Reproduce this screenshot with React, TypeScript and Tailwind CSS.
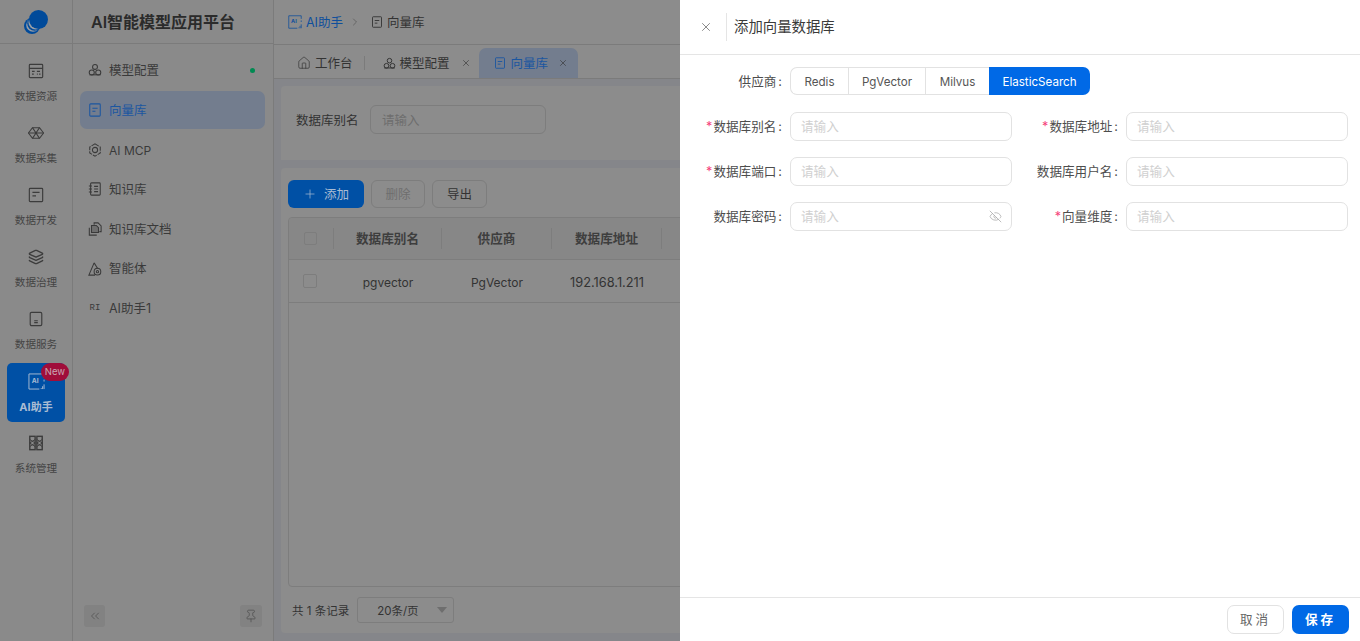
import React from "react";
import { X, Home, ChevronRight, Plus, ChevronsLeft, Pin, EyeOff, Layers } from "lucide-react";

type IP = { className?: string };
const S = ({ className, children, vb = "0 0 16 16", sw = 1 }: IP & { children: React.ReactNode; vb?: string; sw?: number }) => (
  <svg viewBox={vb} fill="none" stroke="currentColor" strokeWidth={sw} className={className}>{children}</svg>
);
const DocIcon = ({ className }: IP) => (
  <S className={className} sw={1.2}><rect x="2" y="1" width="12" height="14" rx="1" /><path d="M5 6h6M5 9.500h3.500" /></S>
);
const TriIcon = ({ className }: IP) => (
  <S className={className} sw={1.2}><circle cx="8" cy="4.500" r="2.800" /><circle cx="4.300" cy="10.800" r="2.900" /><circle cx="11.700" cy="10.800" r="2.900" /><path d="M1.500 13.500h13" /></S>
);
const McpIcon = ({ className }: IP) => (
  <S className={className} sw={1.2}><path d="M8 1l6 3.500v7L8 15l-6-3.500v-7z" strokeDasharray="5 1.200" /><circle cx="8" cy="8" r="3" /></S>
);
const BookIcon = ({ className }: IP) => (
  <S className={className} sw={1.2}><rect x="3" y="1" width="11" height="14" rx="1" /><path d="M1 4.500h3.500M1 8h3.500M1 11.500h3.500M7 5h4.500M7 8h4.500M7 11h4.500" /></S>
);
const FilesIcon = ({ className }: IP) => (
  <S className={className} sw={1.2}><path d="M7 3V1h4.500L15 4.500V11h-2" /><path d="M4 4h5.500L12 6.500V12H4z" fill="currentColor" fillOpacity=".35" /><path d="M1.500 6.500V15H10" /></S>
);
const AgentIcon = ({ className }: IP) => (
  <S className={className} sw={1.2}><path d="M7 1L1 15h7" /><path d="M7 1l4 6.500" /><circle cx="10.800" cy="11" r="3.800" /><circle cx="10.800" cy="11" r="1.300" /></S>
);
const AiBox = ({ className }: IP) => (
  <svg viewBox="0 0 18 18" fill="none" stroke="currentColor" className={className}>
    <path d="M17 5V1H1v16h11" strokeWidth="1" />
    <text x="4" y="10.500" fontSize="7" fontWeight="700" fill="currentColor" stroke="none" fontFamily="Inter">AI</text>
    <path d="M14 16v1M15.500 14v3M17 12v5M17 7v2" strokeWidth="1" />
  </svg>
);
const Logo = () => (
  <svg viewBox="0 0 26 26" className="w-[26px] h-[26px]">
    <circle cx="9" cy="17" r="8" fill="#004a9a" />
    <circle cx="10" cy="16" r="6.800" fill="#9a9fa6" />
    <circle cx="11.500" cy="14.500" r="7.300" fill="#004a9a" />
    <circle cx="12.500" cy="13.500" r="7" fill="#9a9fa6" />
    <circle cx="15.500" cy="10.500" r="9.500" fill="#004a9a" />
  </svg>
);
const R1 = ({ className }: IP) => (
  <S className={className} vb="0 0 18 18" sw={1.300}><rect x="1.500" y="1.500" width="15" height="15" rx="1" /><path d="M1.500 6h15M4.500 9.500h3M4.500 12.500h2M10 9.500h3.500M10 12.500h1M12.500 12.500h1.500" /></S>
);
const R2 = ({ className }: IP) => (
  <S className={className} vb="0 0 18 18" sw={1.200}><path d="M5 3h8l4.500 6-4.500 6H5L.5 9z" /><path d="M5 3l4 6-4 6M13 3L9 9l4 6M.5 9h17" /></S>
);
const R3 = ({ className }: IP) => (
  <S className={className} vb="0 0 18 18" sw={1.300}><rect x="1.500" y="1.500" width="15" height="15" rx="1" /><path d="M5 6h8M5 10h4" /></S>
);
const R5 = ({ className }: IP) => (
  <S className={className} vb="0 0 18 18" sw={1.300}><rect x="2.500" y="1.500" width="13" height="15" rx="1.500" /><path d="M7 11h4M7 13h4" /></S>
);
const R7 = ({ className }: IP) => (
  <S className={className} vb="0 0 18 18" sw={1.600}><rect x="2" y="1.500" width="6" height="15" /><rect x="10" y="1.500" width="6" height="15" /><path d="M2 5l6 4-6 4M8 5L2 9l6 4M10 5l6 4-6 4M16 5l-6 4 6 4" strokeWidth="1" /></S>
);

const railItems: [string, React.FC<IP>][] = [
  ["数据资源", R1],
  ["数据采集", R2],
  ["数据开发", R3],
  ["数据治理", Layers],
  ["数据服务", R5],
];

function RailItem({ label, Icon }: { label: string; Icon: React.FC<IP> }) {
  return (
    <div className="h-[59px] w-[58px] flex flex-col items-center pt-[10px] gap-[10px] text-[#444444]">
      <Icon className="w-[16px] h-[16px] text-[#3c3c3c]" />
      <span className="text-[10.6px] leading-[16px] whitespace-nowrap">{label}</span>
    </div>
  );
}

const menu: [string, React.ReactNode, string][] = [
  ["模型配置", <TriIcon className="w-[14px] h-[14px]" />, "text-[12.5px]"],
  ["向量库", <DocIcon className="w-[14px] h-[14px]" />, "text-[12.5px]"],
  ["AI MCP", <McpIcon className="w-[14px] h-[14px]" />, "text-[12px]"],
  ["知识库", <BookIcon className="w-[14px] h-[14px]" />, "text-[12.5px]"],
  ["知识库文档", <FilesIcon className="w-[14px] h-[14px]" />, "text-[12.5px]"],
  ["智能体", <AgentIcon className="w-[14px] h-[14px]" />, "text-[12.5px]"],
  ["AI助手1", <span className="w-[14px] text-[9px] leading-[14px] text-center font-['Liberation_Mono',monospace]">RI</span>, "text-[12.5px]"],
];

function Field({ label, req, eye }: { label: string; req?: boolean; eye?: boolean }) {
  return (
    <div className="flex items-center h-[29px]">
      <label className="w-[102px] pr-2 pt-[2px] text-right text-[12.6px] text-[#4d4d4d] whitespace-nowrap">
        {req && <span className="text-[#f5417a] mr-[1px]">*</span>}
        {label}<span className="ml-[2px]">:</span>
      </label>
      <div className="flex-1 h-[29px] border border-[#e2e2e2] rounded-[7px] flex items-center pl-[10px] pr-[9px] justify-between">
        <span className="pt-[2px] text-[12.6px] text-[#d0d0d0]">请输入</span>
        {eye && <EyeOff className="w-[13px] h-[13px] text-[#a8a8a8]" strokeWidth={1.4} />}
      </div>
    </div>
  );
}

const segs = [
  ["Redis", "w-[58px] rounded-l-[7px] border-l border-[#e2e2e2]"],
  ["PgVector", "w-[77px] border-l border-[#e2e2e2]"],
  ["Milvus", "w-[64px] border-l border-[#e2e2e2]"],
];

export default function App() {
  return (
    <div className="relative w-[1360px] h-[641px] overflow-hidden flex bg-[#85868a] font-['Inter','Noto_Sans_CJK_SC',sans-serif]">
      {/* rail */}
      <aside className="w-[73px] shrink-0 bg-[#8a8a8a] border-r border-[#7b7b7b] flex flex-col">
        <div className="h-[44px] border-b border-[#7b7b7b] flex items-center justify-center"><Logo /></div>
        <div className="flex flex-col items-center pt-[9px] gap-[3px]">
          {railItems.map(([l, I]) => <RailItem key={l} label={l} Icon={I} />)}
          <div className="relative h-[59px] w-[58px] rounded-[5px] bg-[#0050a5] flex flex-col items-center pt-[10px] gap-[9px] text-[#a9bcd3]">
            <AiBox className="w-[17px] h-[17px]" />
            <span className="text-[11px] leading-[16px] font-bold whitespace-nowrap">AI助手</span>
            <span className="absolute top-0 right-[-4px] w-[28px] h-[18px] rounded-full bg-[#a00d3a] text-[#c9a8b2] text-[9.500px] leading-[18px] text-center">New</span>
          </div>
          <RailItem label="系统管理" Icon={R7} />
        </div>
      </aside>

      {/* menu */}
      <aside className="w-[201px] shrink-0 bg-[#8a8a8a] border-r border-[#7b7b7b] flex flex-col">
        <div className="h-[44px] shrink-0 border-b border-[#7b7b7b] pl-[18px] flex items-center text-[16px] font-semibold text-[#2b2b2b] whitespace-nowrap">AI智能模型应用平台</div>
        <div className="flex-1 flex flex-col gap-[1.670px] pt-[7.300px] pl-[7px] pr-[8px]">
          {menu.map(([l, ic, sz], i) => (
            <div key={l} className={`h-[38px] rounded-[7px] flex items-center pl-[8px] pr-[10px] gap-[7px] ${sz} ${i === 1 ? "bg-[#737d8e] text-[#1b56a0]" : "text-[#3a3a3a]"}`}>
              {ic}
              <span className="flex-1 pt-[2px] whitespace-nowrap">{l}</span>
              {i === 0 && <span className="w-[5px] h-[5px] rounded-full bg-[#008a52]" />}
            </div>
          ))}
        </div>
        <div className="h-[29px] mb-[7px] px-[11px] flex justify-between items-start">
          <div className="w-[21px] h-[22px] rounded-[3px] bg-[#828282] flex items-center justify-center"><ChevronsLeft className="w-[14px] h-[14px] text-[#4c4c4c]" strokeWidth={1.2} /></div>
          <div className="w-[22px] h-[22px] rounded-[3px] bg-[#828282] flex items-center justify-center"><Pin className="w-[14px] h-[14px] text-[#4c4c4c]" strokeWidth={1.2} /></div>
        </div>
      </aside>

      {/* main */}
      <main className="flex-1 min-w-0 flex flex-col">
        <div className="h-[45px] shrink-0 bg-[#8c8c8c] border-b border-[#7b7b7b] flex items-center pl-[14px] text-[12.500px] whitespace-nowrap">
          <AiBox className="w-[14px] h-[14px] text-[#0f4f9c]" />
          <span className="ml-[4px] pt-[2px] text-[#0f4f9c]">AI助手</span>
          <ChevronRight className="ml-[6px] w-[12px] h-[12px] text-[#4c4c4c]" strokeWidth={1.2} />
          <DocIcon className="ml-[10px] w-[12px] h-[12px] text-[#333333]" />
          <span className="ml-[4px] pt-[2px] text-[#333333]">向量库</span>
        </div>
        <div className="h-[34px] shrink-0 bg-[#8c8c8c] border-b border-[#7b7b7b] flex items-end text-[12.500px] text-[#333333] whitespace-nowrap">
          <div className="h-[30px] flex items-center pl-[23px]">
            <Home className="w-[14px] h-[14px] mr-[4px]" strokeWidth={1.2} /><span className="pt-[2px]">工作台</span>
            <span className="ml-[11px] w-px h-[14px] bg-[#7b7b7b]" />
          </div>
          <div className="h-[30px] flex items-center pl-[18px]">
            <TriIcon className="w-[13px] h-[13px] mr-[4px]" /><span className="pt-[2px]">模型配置</span>
            <X className="ml-[11px] w-[10px] h-[10px]" strokeWidth={1.5} />
          </div>
          <div className="ml-[8px] w-[99px] h-[30px] rounded-t-[7px] bg-[#737d8e] text-[#1b56a0] flex items-center pl-[15px]">
            <DocIcon className="w-[12px] h-[12px] mr-[5px]" /><span className="pt-[2px]">向量库</span>
            <X className="ml-[10px] w-[10px] h-[10px] text-[#333333]" strokeWidth={1.5} />
          </div>
        </div>
        <div className="flex-1 min-h-0 flex flex-col gap-[8px] pt-[7px] pb-[8px] pl-[7px] pr-[8px] text-[12.500px]">
          <section className="h-[74px] shrink-0 rounded-t-[4px] bg-[#8c8c8c] pl-[15px] flex items-start pt-[19px] whitespace-nowrap text-[#333333]">
            <span className="h-[29px] leading-[31px] w-[74px]">数据库别名</span>
            <div className="w-[176px] h-[29px] border border-[#7d7d7d] rounded-[6px] px-[11px] leading-[29px] text-[#6e6e6e]">请输入</div>
          </section>
          <section className="flex-1 min-h-0 rounded-[4px] bg-[#8c8c8c] px-[7px] pt-[12px] flex flex-col">
            <div className="h-[28px] shrink-0 flex gap-[7px] text-[#333333]">
              <div className="w-[76px] rounded-[6px] bg-[#0050a5] text-[#a9bcd3] flex items-center justify-center gap-[7px]"><Plus className="w-[14px] h-[14px]" strokeWidth={1.2} /><span className="pt-[2px]">添加</span></div>
              <div className="w-[54px] rounded-[6px] border border-[#7d7d7d] text-[#6e6e6e] flex items-center justify-center pt-[2px]">删除</div>
              <div className="w-[55px] rounded-[6px] border border-[#7d7d7d] flex items-center justify-center pt-[2px]">导出</div>
            </div>
            <div className="mt-[9px] h-[370px] flex-1 border border-[#7d7d7d] rounded-[4px] whitespace-nowrap text-[#333333]">
              <div className="h-[42px] border-b border-[#7d7d7d] bg-[#878787] rounded-t-[4px] flex items-center font-semibold text-[#3e3e3e] text-[12.600px]">
                <div className="w-[45px] h-[21px] border-r border-[#7d7d7d] flex items-center pl-[15px]"><span className="w-[13px] h-[13px] border border-[#7d7d7d] rounded-[2px]" /></div>
                <div className="w-[108px] h-[21px] border-r border-[#7d7d7d] text-center leading-[21px]">数据库别名</div>
                <div className="w-[110px] h-[21px] border-r border-[#7d7d7d] text-center leading-[21px]">供应商</div>
                <div className="w-[110px] h-[21px] border-r border-[#7d7d7d] text-center leading-[21px]">数据库地址</div>
              </div>
              <div className="h-[43px] border-b border-[#7d7d7d] flex items-center text-[12px] pt-[3px]">
                <div className="w-[45px] flex items-center pl-[14px] mt-[-3px]"><span className="w-[14px] h-[14px] border border-[#7d7d7d] rounded-[2px]" /></div>
                <div className="w-[108px] text-center">pgvector</div>
                <div className="w-[110px] text-center">PgVector</div>
                <div className="w-[110px] text-center text-[12.800px]">192.168.1.211</div>
              </div>
            </div>
            <div className="h-[46px] shrink-0 flex items-center pl-[4px] text-[11.500px] text-[#333333] whitespace-nowrap">
              <span className="pt-[3px]">共 1 条记录</span>
              <div className="relative ml-[8px] w-[97px] h-[26px] border border-[#7d7d7d] rounded-[3px] flex items-center pl-[19px] pt-[3px]">20条/页
                <span className="absolute right-[6px] top-[9px] w-0 h-0 border-x-[5px] border-x-transparent border-t-[6px] border-t-[#6e6e6e]" />
              </div>
            </div>
          </section>
        </div>
      </main>

      {/* drawer */}
      <div className="absolute top-0 right-0 bottom-0 w-[680px] bg-white flex flex-col text-[#333333]">
        <header className="h-[55px] shrink-0 border-b border-[#e5e5e5] flex items-center">
          <X className="ml-[19px] w-[14px] h-[14px] text-[#666666]" strokeWidth={1.3} />
          <span className="ml-[13px] w-px h-[28px] bg-[#e5e5e5]" />
          <span className="ml-[7px] text-[14.400px] text-[#3a3a3a]">添加向量数据库</span>
        </header>
        <div className="flex-1 pt-[12px] pl-[8px] pr-[12px]">
          <div className="flex items-center h-[28px]">
            <label className="w-[102px] pr-2 pt-[2px] text-right text-[12.600px] text-[#4d4d4d]">供应商<span className="ml-[2px]">:</span></label>
            <div className="flex h-[28px] text-[11.600px] text-[#555555]">
              {segs.map(([t, c]) => (
                <div key={t} className={`${c} border-y pt-[3px] flex items-center justify-center`}>{t}</div>
              ))}
              <div className="w-[101px] rounded-r-[7px] bg-[#0069e6] text-white pt-[3px] flex items-center justify-center">ElasticSearch</div>
            </div>
          </div>
          <div className="mt-[17px] grid grid-cols-2 gap-x-[12px] gap-y-[16px]">
            <Field label="数据库别名" req />
            <Field label="数据库地址" req />
            <Field label="数据库端口" req />
            <Field label="数据库用户名" />
            <Field label="数据库密码" eye />
            <Field label="向量维度" req />
          </div>
        </div>
        <footer className="h-[44px] shrink-0 border-t border-[#e5e5e5] flex justify-end items-start pt-[7px] pr-[11px] gap-[8px] text-[12.600px]">
          <div className="w-[57px] h-[29px] rounded-[7px] border border-[#e2e2e2] text-[#666666] pt-[2px] flex items-center justify-center tracking-[3px]">取消</div>
          <div className="w-[57px] h-[29px] rounded-[7px] bg-[#0069e6] text-white font-semibold pt-[2px] flex items-center justify-center tracking-[3px]">保存</div>
        </footer>
      </div>
    </div>
  );
}
